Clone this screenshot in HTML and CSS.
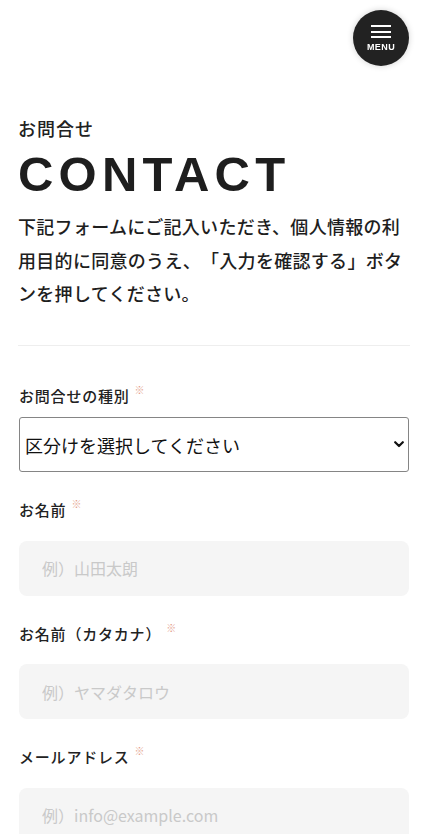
FILE: index.html
```html
<!DOCTYPE html>
<html lang="ja">
<head>
	<meta charset="UTF-8">
	<meta name="viewport" content="width=device-width, initial-scale=1.0">
	<title>お問合せ | CONTACT</title>
	<link rel="stylesheet" href="styles.css">
</head>
<body>
	<button class="menu-button" type="button" aria-label="メニュー">
		<span class="menu-lines">
			<span></span>
			<span></span>
			<span></span>
		</span>
		<span class="menu-text">MENU</span>
	</button>

	<main class="contact">
		<header class="page-title">
			<p class="page-title-ja">お問合せ</p>
			<h1 class="page-title-en">CONTACT</h1>
		</header>

		<p class="lead">下記フォームにご記入いただき、個人情報の利用目的に同意のうえ、「入力を確認する」ボタンを押してください。</p>

		<hr class="divider">

		<form class="contact-form">
			<div class="field field-first">
				<label class="field-label" for="category">お問合せの種別<span class="required">※</span></label>
				<div class="select-wrap">
					<select id="category" class="select">
						<option>区分けを選択してください</option>
						<option>製品について</option>
						<option>採用について</option>
						<option>その他</option>
					</select>
					<svg class="select-arrow" width="10" height="7" viewBox="0 0 10 7" aria-hidden="true">
						<path d="M1.2 1.2 L5 5 L8.8 1.2" fill="none" stroke="#111" stroke-width="2.2" stroke-linecap="round" stroke-linejoin="round"/>
					</svg>
				</div>
			</div>

			<div class="field">
				<label class="field-label" for="name">お名前<span class="required">※</span></label>
				<input id="name" class="text-input" type="text" placeholder="例）山田太朗">
			</div>

			<div class="field">
				<label class="field-label" for="kana">お名前（カタカナ）<span class="required">※</span></label>
				<input id="kana" class="text-input" type="text" placeholder="例）ヤマダタロウ">
			</div>

			<div class="field">
				<label class="field-label" for="email">メールアドレス<span class="required">※</span></label>
				<input id="email" class="text-input" type="email" placeholder="例）info@example.com">
			</div>
		</form>
	</main>
</body>
</html>
```

FILE: styles.css
```css
html {
	box-sizing: border-box;
}

*, *:before, *:after {
	box-sizing: inherit;
}

body {
	margin: 0;
	padding: 0;
	font-family: "Noto Sans CJK JP", "Noto Sans", sans-serif;
	color: #222;
	background: #fff;
	text-spacing-trim: space-all;
}

/* menu */

.menu-button {
	position: fixed;
	top: 10px;
	right: 19px;
	width: 56px;
	height: 56px;
	padding: 0;
	border: 0;
	border-radius: 50%;
	background: #222;
	box-shadow: 0 0 6px rgba(0, 0, 0, 0.18);
	display: flex;
	flex-direction: column;
	align-items: center;
	justify-content: center;
	cursor: pointer;
}

.menu-lines {
	display: flex;
	flex-direction: column;
	gap: 3.7px;
	width: 20px;
	margin-top: 1px;
}

.menu-lines span {
	display: block;
	height: 2px;
	background: #fff;
}

.menu-text {
	margin-top: 5px;
	font-family: "Liberation Sans", Arial, sans-serif;
	font-weight: 700;
	font-size: 9px;
	line-height: 1;
	letter-spacing: 0.4px;
	color: #fff;
}

/* page */

.contact {
	padding: 115px 18px 40px;
}

.page-title-ja {
	margin: 0;
	font-size: 18px;
	line-height: 27px;
	letter-spacing: 1px;
	font-weight: 500;
}

.page-title-en {
	margin: 8px 0 0;
	font-family: "Liberation Sans", Arial, sans-serif;
	font-weight: 700;
	font-size: 49px;
	line-height: 1;
	letter-spacing: 5.2px;
	color: #1e1e1e;
}

.lead {
	margin: 11px 0 0;
	font-size: 18px;
	line-height: 33.5px;
	font-weight: 500;
	letter-spacing: 0.3px;
	color: #1e1e1e;
}

.divider {
	margin: 34px 0 0;
	border: 0;
	border-top: 1px solid #eee;
}

/* form */

.contact-form {
	margin: 0 1px;
}

.field {
	display: flex;
	flex-direction: column;
	gap: 19px;
	margin-top: 27px;
}

.field-first {
	margin-top: 39px;
	gap: 10px;
}

.field-label {
	display: block;
	height: 22.5px;
	font-size: 15px;
	line-height: 22.5px;
	font-weight: 500;
	letter-spacing: 0.8px;
	color: #222;
}

.required {
	margin-left: 5px;
	font-size: 10px;
	line-height: 1;
	vertical-align: top;
	color: #e39a86;
}

.select-wrap {
	position: relative;
}

.select {
	-webkit-appearance: none;
	appearance: none;
	display: block;
	width: 100%;
	height: 55px;
	margin: 0;
	padding: 0 30px 0 5px;
	border: 1px solid #858585;
	border-radius: 3px;
	background: #fff;
	font-family: inherit;
	font-size: 18px;
	color: #111;
	outline: none;
}

.select-arrow {
	position: absolute;
	top: 24px;
	right: 5px;
	pointer-events: none;
}

.text-input {
	display: block;
	width: 100%;
	height: 55px;
	margin: 0;
	padding: 0 23px;
	border: 0;
	border-radius: 8px;
	background: #f5f5f5;
	font-family: inherit;
	font-size: 16px;
	color: #222;
	outline: none;
}

.text-input::placeholder {
	color: #c9c9c9;
}
```
